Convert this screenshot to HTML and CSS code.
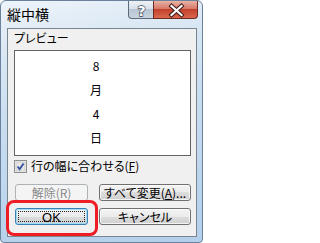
FILE: index.html
```html
<!DOCTYPE html>
<html lang="ja">
<head>
<meta charset="utf-8">
<title>縦中横</title>
<link rel="stylesheet" href="styles.css">
</head>
<body>
<div class="window">
  <div class="titlebar">
    <div class="title">縦中横</div>
    <div class="caption-buttons">
      <div class="cap help">
        <svg width="25" height="18" viewBox="0 0 25 18"><text x="12.5" y="15" text-anchor="middle" class="qmark">?</text></svg>
      </div>
      <div class="cap close">
        <svg width="45" height="18" viewBox="0 0 45 18"><path d="M17.5 5 L27.5 14 M27.5 5 L17.5 14" class="x-out"/><path d="M17.5 5 L27.5 14 M27.5 5 L17.5 14" class="x-in"/></svg>
      </div>
    </div>
  </div>
  <div class="client">
    <div class="label">プレビュー</div>
    <div class="preview">
      <div class="vtext">
        <div class="ch">8</div>
        <div class="ch">月</div>
        <div class="ch">4</div>
        <div class="ch">日</div>
      </div>
    </div>
    <div class="check-row">
      <span class="checkbox">
        <svg width="13" height="13" viewBox="0 0 13 13"><rect x="0.5" y="0.5" width="12" height="12" fill="#f4f4f4" stroke="#8e8f8f"/><rect x="2" y="2" width="9" height="9" fill="#e6e6e6" stroke="#c6c6c6" stroke-width="0.8"/><path d="M3.6 6.4 L5.6 9.2 L9.6 3.4" fill="none" stroke="#2f4f9c" stroke-width="1.8"/></svg>
      </span>
      <span class="check-label">行の幅に合わせる(<u>F</u>)</span>
    </div>
    <div class="buttons">
      <div class="btn disabled">解除(R)</div>
      <div class="btn">すべて変更(<u>A</u>)...</div>
      <div class="btn default"><span class="focus">OK</span></div>
      <div class="btn">キャンセル</div>
    </div>
  </div>
  <div class="highlight"></div>
</div>
</body>
</html>
```
FILE: styles.css
```css
html, body {
  margin: 0;
  padding: 0;
  background: #ffffff;
}
body {
  font-family: "Noto Sans CJK JP", "Noto Sans", sans-serif;
  font-size: 12px;
  color: #000;
  font-feature-settings: "palt";
}
.window {
  position: relative;
  width: 203px;
  height: 243px;
  box-sizing: border-box;
  border: 1px solid #6a819b;
  border-radius: 6px 6px 4px 4px;
  background: linear-gradient(170deg, #eef4fa 0%, #dbe8f4 18%, #c9ddf0 45%, #bcd5ee 75%, #b3cfeb 100%);
  display: flex;
  flex-direction: column;
}
.titlebar {
  height: 27px;
  display: flex;
  justify-content: space-between;
  align-items: flex-start;
}
.title {
  font-size: 14px;
  line-height: 17px;
  padding: 5px 0 0 6px;
  color: #000;
  font-feature-settings: normal;
}
.caption-buttons {
  display: flex;
  margin-right: 4px;
}
.cap {
  height: 18px;
  box-sizing: border-box;
  border: 1px solid #5b6a7b;
  border-top: none;
}
.cap svg { display: block; }
.help {
  width: 25px;
  border-right: none;
  border-radius: 0 0 0 4px;
  background: linear-gradient(#eef2f6 0%, #d9e1ea 45%, #b9c5d3 50%, #c9d4e0 100%);
}
.close {
  width: 45px;
  border-color: #6b2a22;
  border-radius: 0 0 4px 0;
  background: linear-gradient(#e8b2a6 0%, #d77a68 45%, #c4412d 50%, #d9674c 100%);
}
.qmark {
  font-family: "DejaVu Sans", sans-serif;
  font-weight: bold;
  font-size: 14px;
  fill: #ffffff;
  stroke: #3b4756;
  stroke-width: 1.3;
  paint-order: stroke;
}
.x-out { stroke: #3d1d18; stroke-width: 4.2; stroke-linecap: square; fill: none; }
.x-in { stroke: #ffffff; stroke-width: 2.2; stroke-linecap: square; fill: none; }
.client {
  margin: 0 5px 5px 6px;
  flex: 1;
  border: 1px solid #7b8590;
  background: #f0f0f0;
  padding: 2px 0 0 6px;
}
.label {
  line-height: 14px;
}
.preview {
  margin-top: 5px;
  width: 177px;
  height: 106px;
  box-sizing: border-box;
  border: 1px solid #646464;
  background: #ffffff;
  padding: 3px 0 0 75px;
}
.vtext {
  width: 12px;
}
.ch {
  height: 24px;
  line-height: 24px;
  text-align: center;
  font-size: 12px;
}
.check-row {
  margin-top: 2px;
  display: flex;
  align-items: center;
  height: 16px;
  gap: 4px;
}
.checkbox { display: block; height: 13px; }
.checkbox svg { display: block; }
.check-label {
  line-height: 16px;
}
.buttons {
  margin-top: 10px;
  padding-left: 1px;
  display: grid;
  grid-template-columns: 73px 92px;
  grid-auto-rows: 17px;
  column-gap: 11px;
  row-gap: 7px;
}
.btn {
  box-sizing: border-box;
  border: 1px solid #707070;
  border-radius: 3px;
  background: linear-gradient(#f3f3f3 0%, #ebebeb 50%, #dddddd 50%, #cfcfcf 100%);
  box-shadow: inset 0 0 0 1px rgba(255,255,255,0.75);
  text-align: center;
  line-height: 15px;
  font-size: 12px;
  white-space: nowrap;
}
.btn.disabled {
  border-color: #adb2b5;
  background: #f4f4f4;
  box-shadow: none;
  color: #8a8a8a;
}
.btn.default {
  border-color: #3c7fb1;
  box-shadow: inset 0 0 0 1px #9fdcf6;
  padding: 2px;
}
.focus {
  display: block;
  height: 100%;
  box-sizing: border-box;
  border: 1px dotted #222;
  line-height: 11px;
  font-family: "Liberation Sans", sans-serif;
  font-size: 13px;
}
.highlight {
  position: absolute;
  left: 5px;
  top: 199px;
  width: 92px;
  height: 36px;
  box-sizing: border-box;
  border: 3px solid #ee1c24;
  border-radius: 8px;
}
```
